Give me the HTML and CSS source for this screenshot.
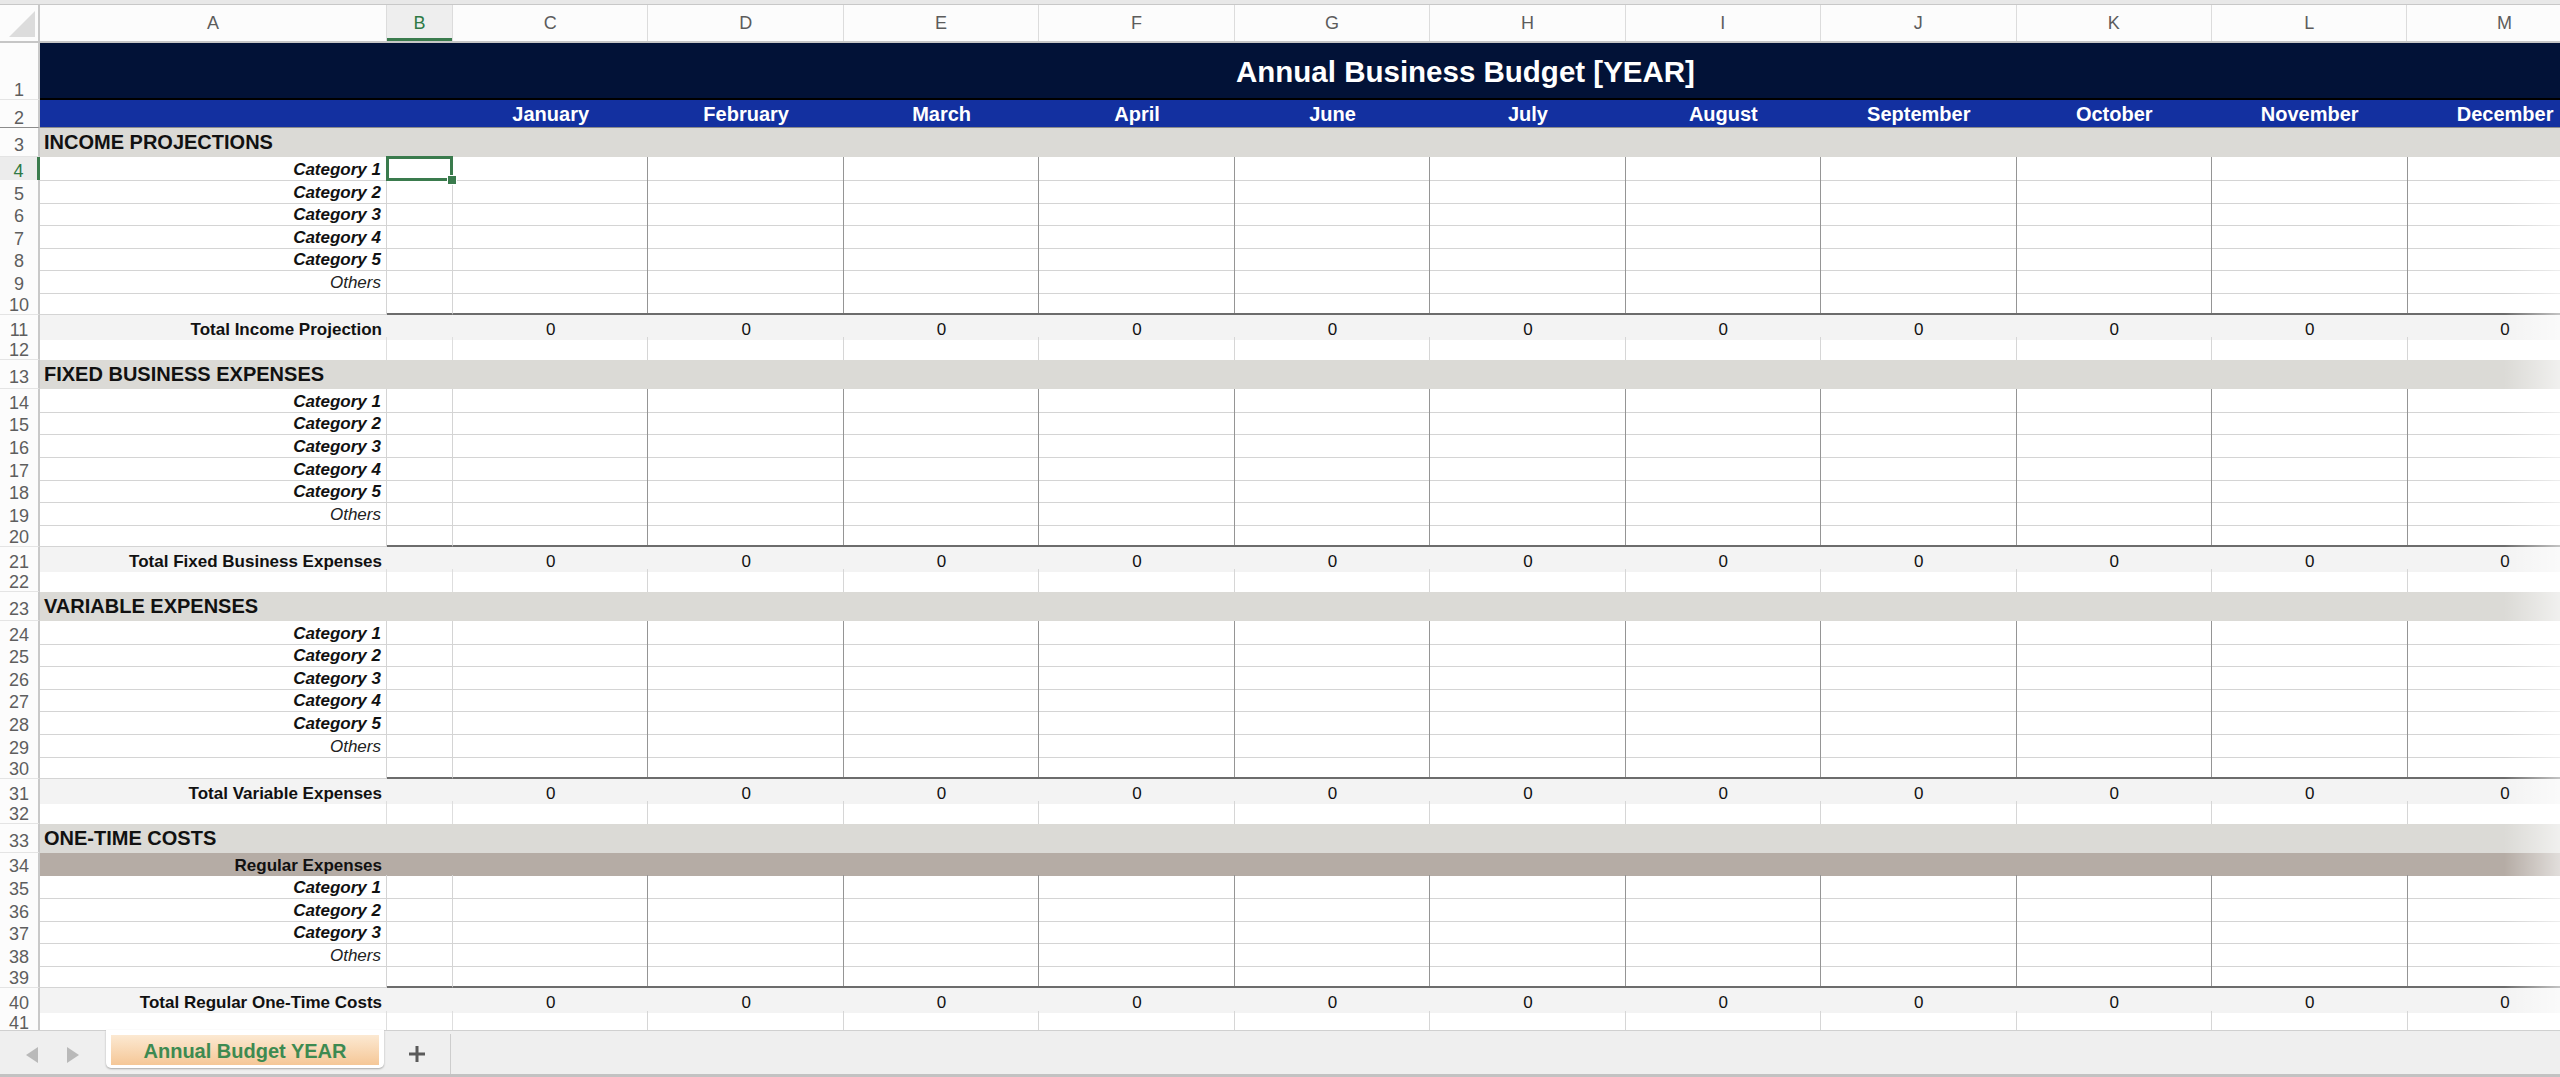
FILE: index.html
```html
<!DOCTYPE html>
<html lang="en">
<head>
  <meta charset="UTF-8" />
  <title>Annual Business Budget [YEAR]</title>
  <link rel="stylesheet" href="styles.css">
</head>
<body>
  <div class="topbar"></div>

  <div class="sheet">
    <!-- column letters -->
    <div class="row colhead">
      <div class="corner">
        <svg width="26" height="26" viewBox="0 0 26 26"><polygon points="0,26 26,26 26,0" fill="#dcdcdc"/></svg>
      </div>
      <div class="ch">A</div>
      <div class="ch on">B</div>
      <div class="ch">C</div>
      <div class="ch">D</div>
      <div class="ch">E</div>
      <div class="ch">F</div>
      <div class="ch">G</div>
      <div class="ch">H</div>
      <div class="ch">I</div>
      <div class="ch">J</div>
      <div class="ch">K</div>
      <div class="ch">L</div>
      <div class="ch">M</div>
    </div>

    <div class="row r1">
      <div class="rn">1</div>
      <div class="title">Annual Business Budget [YEAR]</div>
    </div>

    <div class="row r2">
      <div class="rn">2</div>
      <div class="mc"></div>
      <div class="mc"></div>
      <div class="mc">January</div>
      <div class="mc">February</div>
      <div class="mc">March</div>
      <div class="mc">April</div>
      <div class="mc">June</div>
      <div class="mc">July</div>
      <div class="mc">August</div>
      <div class="mc">September</div>
      <div class="mc">October</div>
      <div class="mc">November</div>
      <div class="mc">December</div>
    </div>

    <div class="row section"><div class="rn">3</div><div class="sec">INCOME PROJECTIONS</div></div>

    <div class="body">
      <div class="row item"><div class="rn on">4</div><div class="lbl cat">Category 1</div><div class="b active"></div><div class="cells"></div></div>
      <div class="row item"><div class="rn">5</div><div class="lbl cat">Category 2</div><div class="b"></div><div class="cells"></div></div>
      <div class="row item"><div class="rn">6</div><div class="lbl cat">Category 3</div><div class="b"></div><div class="cells"></div></div>
      <div class="row item"><div class="rn">7</div><div class="lbl cat">Category 4</div><div class="b"></div><div class="cells"></div></div>
      <div class="row item"><div class="rn">8</div><div class="lbl cat">Category 5</div><div class="b"></div><div class="cells"></div></div>
      <div class="row item"><div class="rn">9</div><div class="lbl oth">Others</div><div class="b"></div><div class="cells"></div></div>
      <div class="row item last"><div class="rn">10</div><div class="lbl"></div><div class="b"></div><div class="cells"></div></div>
      <div class="row total">
        <div class="rn">11</div><div class="lbl">Total Income Projection</div><div class="b"></div>
        <div class="v">0</div><div class="v">0</div><div class="v">0</div><div class="v">0</div><div class="v">0</div><div class="v">0</div><div class="v">0</div><div class="v">0</div><div class="v">0</div><div class="v">0</div><div class="v">0</div>
      </div>
      <div class="row blank"><div class="rn">12</div><div class="lbl"></div><div class="b"></div><div class="cells"></div></div>

      <div class="row section"><div class="rn">13</div><div class="sec">FIXED BUSINESS EXPENSES</div></div>
      <div class="row item"><div class="rn">14</div><div class="lbl cat">Category 1</div><div class="b"></div><div class="cells"></div></div>
      <div class="row item"><div class="rn">15</div><div class="lbl cat">Category 2</div><div class="b"></div><div class="cells"></div></div>
      <div class="row item"><div class="rn">16</div><div class="lbl cat">Category 3</div><div class="b"></div><div class="cells"></div></div>
      <div class="row item"><div class="rn">17</div><div class="lbl cat">Category 4</div><div class="b"></div><div class="cells"></div></div>
      <div class="row item"><div class="rn">18</div><div class="lbl cat">Category 5</div><div class="b"></div><div class="cells"></div></div>
      <div class="row item"><div class="rn">19</div><div class="lbl oth">Others</div><div class="b"></div><div class="cells"></div></div>
      <div class="row item last"><div class="rn">20</div><div class="lbl"></div><div class="b"></div><div class="cells"></div></div>
      <div class="row total">
        <div class="rn">21</div><div class="lbl">Total Fixed Business Expenses</div><div class="b"></div>
        <div class="v">0</div><div class="v">0</div><div class="v">0</div><div class="v">0</div><div class="v">0</div><div class="v">0</div><div class="v">0</div><div class="v">0</div><div class="v">0</div><div class="v">0</div><div class="v">0</div>
      </div>
      <div class="row blank"><div class="rn">22</div><div class="lbl"></div><div class="b"></div><div class="cells"></div></div>

      <div class="row section"><div class="rn">23</div><div class="sec">VARIABLE EXPENSES</div></div>
      <div class="row item"><div class="rn">24</div><div class="lbl cat">Category 1</div><div class="b"></div><div class="cells"></div></div>
      <div class="row item"><div class="rn">25</div><div class="lbl cat">Category 2</div><div class="b"></div><div class="cells"></div></div>
      <div class="row item"><div class="rn">26</div><div class="lbl cat">Category 3</div><div class="b"></div><div class="cells"></div></div>
      <div class="row item"><div class="rn">27</div><div class="lbl cat">Category 4</div><div class="b"></div><div class="cells"></div></div>
      <div class="row item"><div class="rn">28</div><div class="lbl cat">Category 5</div><div class="b"></div><div class="cells"></div></div>
      <div class="row item"><div class="rn">29</div><div class="lbl oth">Others</div><div class="b"></div><div class="cells"></div></div>
      <div class="row item last"><div class="rn">30</div><div class="lbl"></div><div class="b"></div><div class="cells"></div></div>
      <div class="row total">
        <div class="rn">31</div><div class="lbl">Total Variable Expenses</div><div class="b"></div>
        <div class="v">0</div><div class="v">0</div><div class="v">0</div><div class="v">0</div><div class="v">0</div><div class="v">0</div><div class="v">0</div><div class="v">0</div><div class="v">0</div><div class="v">0</div><div class="v">0</div>
      </div>
      <div class="row blank"><div class="rn">32</div><div class="lbl"></div><div class="b"></div><div class="cells"></div></div>

      <div class="row section"><div class="rn">33</div><div class="sec">ONE-TIME COSTS</div></div>
      <div class="row sub"><div class="rn">34</div><div class="lbl">Regular Expenses</div><div class="fill"></div></div>
      <div class="row item"><div class="rn">35</div><div class="lbl cat">Category 1</div><div class="b"></div><div class="cells"></div></div>
      <div class="row item"><div class="rn">36</div><div class="lbl cat">Category 2</div><div class="b"></div><div class="cells"></div></div>
      <div class="row item"><div class="rn">37</div><div class="lbl cat">Category 3</div><div class="b"></div><div class="cells"></div></div>
      <div class="row item"><div class="rn">38</div><div class="lbl oth">Others</div><div class="b"></div><div class="cells"></div></div>
      <div class="row item last"><div class="rn">39</div><div class="lbl"></div><div class="b"></div><div class="cells"></div></div>
      <div class="row total">
        <div class="rn">40</div><div class="lbl">Total Regular One-Time Costs</div><div class="b"></div>
        <div class="v">0</div><div class="v">0</div><div class="v">0</div><div class="v">0</div><div class="v">0</div><div class="v">0</div><div class="v">0</div><div class="v">0</div><div class="v">0</div><div class="v">0</div><div class="v">0</div>
      </div>
      <div class="row blank"><div class="rn">41</div><div class="lbl"></div><div class="b"></div><div class="cells"></div></div>
    </div>
  </div>

  <!-- sheet tabs -->
  <div class="tabs">
    <div class="nav">
      <svg width="54" height="16" viewBox="0 0 54 16">
        <polygon points="12,0 12,16 0,8" fill="#b9b9b9"/>
        <polygon points="41,0 41,16 53,8" fill="#b9b9b9"/>
      </svg>
    </div>
    <div class="tab"><span>Annual Budget YEAR</span></div>
    <div class="add">
      <svg width="16" height="16" viewBox="0 0 16 16">
        <rect x="0" y="6.5" width="16" height="3" fill="#5a5a5a"/>
        <rect x="6.5" y="0" width="3" height="16" fill="#5a5a5a"/>
      </svg>
    </div>
  </div>
</body>
</html>
```

FILE: styles.css
```css
* {
  box-sizing: border-box;
}

html, body {
  margin: 0;
  padding: 0;
}

body {
  width: 2560px;
  height: 1077px;
  overflow: hidden;
  background: #fff;
  font-family: "Liberation Sans", Arial, sans-serif;
  color: #111;
  display: flex;
  flex-direction: column;
}

.topbar {
  flex: none;
  height: 5px;
  background: #e8e8e8;
  border-bottom: 1px solid #c8c8c8;
}

.sheet {
  flex: 1;
  min-height: 0;
  overflow: hidden;
  position: relative;
}

.row {
  display: grid;
  grid-template-columns: 40px 347px 66px repeat(11, 195.45px);
  width: 2603px;
  height: 22.56px;
}

/* column letters */
.colhead {
  height: 38px;
  background: #fcfcfc;
  border-bottom: 2px solid #c6c6c6;
}

.corner {
  border-right: 2px solid #c9c9c9;
  display: flex;
  align-items: flex-end;
  justify-content: flex-end;
  padding: 0 3px 4px 0;
}

.ch {
  display: flex;
  align-items: center;
  justify-content: center;
  font-size: 18px;
  color: #5c5c5c;
  border-right: 1px solid #dcdcdc;
  padding-top: 1px;
}

.ch.on {
  background: #eeeeee;
  color: #2f7a45;
  box-shadow: inset 0 -3px #3a7b4d;
}

/* row numbers */
.rn {
  display: flex;
  align-items: flex-end;
  justify-content: center;
  font-size: 18px;
  line-height: 18px;
  color: #5e5e5e;
  background: #fcfcfc;
  border-right: 2px solid #c9c9c9;
  border-bottom: 1px solid #e4e4e4;
}

.rn.on {
  background: #ececec;
  color: #2f7a45;
  border-right: 3px solid #3a7b4d;
}

.section .rn {
  padding-bottom: 2px;
}

/* title + months */
.r1 {
  height: 57px;
}

.title {
  grid-column: 2 / -1;
  background: #021237;
  border-bottom: 2px solid #000;
  color: #fff;
  font-weight: bold;
  font-size: 29.5px;
  display: flex;
  align-items: center;
  padding: 3px 0 0 1196px;
}

.r2 {
  height: 28px;
}

.r2 > div {
  border-bottom: 1px solid #8c8c8c;
}

.mc {
  background: #1330a0;
  color: #fff;
  font-weight: bold;
  font-size: 20px;
  display: flex;
  align-items: center;
  justify-content: center;
  padding-top: 2px;
}

/* section header rows */
.section {
  height: 29px;
}

.sec {
  grid-column: 2 / -1;
  background: #dbdad6;
  font-weight: bold;
  font-size: 20px;
  padding-left: 4px;
  display: flex;
  align-items: center;
}

.body {
  position: relative;
}

.body::after {
  content: "";
  position: absolute;
  top: 0;
  right: 0;
  bottom: 0;
  width: 56px;
  background: linear-gradient(to right, rgba(255, 255, 255, 0), rgba(255, 255, 255, 0.6));
  pointer-events: none;
}

.lbl {
  display: flex;
  align-items: center;
  justify-content: flex-end;
  padding: 3px 5px 0 0;
  font-size: 17px;
  white-space: nowrap;
}

.cat {
  font-weight: bold;
  font-style: italic;
}

.oth {
  font-style: italic;
  color: #222;
}

/* input rows */
.item .lbl,
.item .b {
  border-right: 1px solid #d4d4d4;
  border-bottom: 1px solid #d4d4d4;
}

.item .cells {
  grid-column: 4 / -1;
  border-bottom: 1px solid #d4d4d4;
  background: repeating-linear-gradient(to right, transparent 0 194.45px, #959595 194.45px 195.45px);
}

.item.last .b,
.item.last .cells {
  border-bottom: 2px solid #6c6c6c;
}

.b.active {
  position: relative;
}

.b.active::after {
  content: "";
  position: absolute;
  left: -1px;
  top: -1px;
  right: -1px;
  bottom: -1px;
  border: 3px solid #3a7b4d;
}

.b.active::before {
  content: "";
  position: absolute;
  right: -5px;
  bottom: -5px;
  width: 8px;
  height: 8px;
  background: #3a7b4d;
  border: 1px solid #fff;
  z-index: 2;
}

/* totals */
.total .lbl,
.total .b,
.total .v {
  background: #f3f3f3;
}

.total .lbl {
  font-weight: bold;
  padding-top: 5px;
}

.v {
  display: flex;
  align-items: center;
  justify-content: center;
  font-size: 17px;
  padding-top: 5px;
}

/* spacer rows */
.blank .lbl,
.blank .b {
  border-right: 1px solid #dedede;
}

.blank .cells {
  grid-column: 4 / -1;
  background: repeating-linear-gradient(to right, transparent 0 194.45px, #d6d6d6 194.45px 195.45px);
}

/* regular expenses band */
.sub .lbl,
.sub .fill {
  background: #b5aca5;
}

.sub .lbl {
  font-weight: bold;
}

.sub .fill {
  grid-column: 3 / -1;
}

/* sheet tabs */
.tabs {
  flex: none;
  height: 47px;
  background: #efefef;
  border-top: 1px solid #d0d0d0;
  border-bottom: 3px solid #c2c2c2;
  display: flex;
  align-items: flex-start;
}

.nav {
  width: 106px;
  padding: 16px 0 0 26px;
}

.nav svg {
  display: block;
}

.tab {
  width: 278px;
  height: 38px;
  margin-top: -1px;
  padding: 5px 5px 3px;
  background: #fff;
  border-radius: 0 0 5px 5px;
  box-shadow: 0 1px 2px rgba(0, 0, 0, 0.3);
}

.tab span {
  display: flex;
  height: 100%;
  align-items: center;
  justify-content: center;
  background: linear-gradient(#fce9d2, #f5c797);
  color: #3d8a51;
  font-weight: bold;
  font-size: 20px;
  padding-top: 2px;
}

.add {
  width: 67px;
  height: 40px;
  margin-top: 3px;
  border-right: 1px solid #cdcdcd;
  display: flex;
  align-items: center;
  justify-content: center;
}

.add svg {
  display: block;
}
```
